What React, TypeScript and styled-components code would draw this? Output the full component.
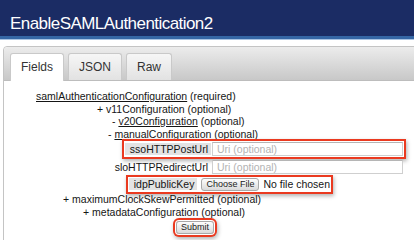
import React from "react";
import styled, { createGlobalStyle, css } from "styled-components";

const Global = createGlobalStyle`
  html, body { margin: 0; padding: 0; background: #fff; overflow: hidden; }
  body { font-family: "Liberation Sans", Arial, sans-serif; color: #151515; }
`;

const Page = styled.div`
  width: 414px;
  height: 240px;
  overflow: hidden;
`;

const Header = styled.header`
  height: 36px;
  background: #1b2c64;
  border-bottom: 3px solid #3566a5;
  box-shadow: 0 1px 0 #a9c3e3;
  padding-left: 10px;
  box-sizing: content-box;
`;

const Title = styled.h1`
  margin: 0;
  padding-top: 11px;
  font-family: "Liberation Sans", Arial, sans-serif;
  font-weight: normal;
  font-size: 17px;
  letter-spacing: -0.55px;
  line-height: 25px;
  color: #fff;
`;

const Panel = styled.section`
  margin: 7px -10px 0 3px;
  border: 1px solid #c4c4c4;
  border-radius: 4px 0 0 0;
  min-height: 220px;
`;

const TabBar = styled.div`
  display: flex;
  gap: 4px;
  height: 27px;
  padding: 6px 0 0 6px;
  background: linear-gradient(#ececec, #c8c8c8);
  border-bottom: 1px solid #bdbdbd;
  border-radius: 4px 0 0 0;
`;

const Tab = styled.div<{ $active?: boolean }>`
  height: 27px;
  margin-bottom: -1px;
  padding: 0 10px;
  box-sizing: border-box;
  border: 1px solid #c9c9c9;
  border-bottom: none;
  border-radius: 3px 3px 0 0;
  font-size: 12px;
  line-height: 27px;
  color: #333;
  background: ${(p) => (p.$active ? "#fff" : "linear-gradient(#f6f6f6, #e2e2e2)")};
  ${(p) => p.$active && css`height: 28px;`}
`;

const Content = styled.div`
  padding-top: 9px;
  font-size: 10.5px;
`;

const Line = styled.div<{ $indent: number }>`
  height: 12.5px;
  line-height: 12.5px;
  padding-left: ${(p) => p.$indent}px;
  white-space: nowrap;
`;

const Link = styled.span`
  text-decoration: underline;
`;

const highlight = css`
  box-shadow: 0 0 0 1px #fff, 0 0 0 3px #ea3a20, 1px 2px 4px 3px rgba(0, 0, 0, 0.3);
`;

const FieldRow = styled.div<{ $width: number; $height: number }>`
  display: flex;
  justify-content: flex-end;
  align-items: center;
  width: ${(p) => p.$width}px;
  height: ${(p) => p.$height}px;
`;

const Group = styled.div<{ $marked?: boolean }>`
  display: flex;
  align-items: center;
  ${(p) => p.$marked && highlight}
`;

const Label = styled.label<{ $marked?: boolean }>`
  height: 12px;
  line-height: 12px;
  padding: 0 3px 0 5px;
  margin-right: 1px;
  white-space: nowrap;
  background: ${(p) => (p.$marked ? "#e3e3e3" : "transparent")};
`;

const TextInput = styled.input`
  width: 191px;
  height: 14px;
  box-sizing: border-box;
  padding: 0 4px;
  border: 1px solid #cfcfcf;
  border-top-color: #b5b5b5;
  font-family: "Liberation Sans", Arial, sans-serif;
  font-size: 10.5px;
  color: #222;
  outline: none;
  &::placeholder { color: #b3b3b3; }
`;

const SmallButton = styled.button<{ $marked?: boolean }>`
  height: 13px;
  padding: 0 4px;
  box-sizing: border-box;
  border: 1px solid #a9a9a9;
  border-radius: 3px;
  background: linear-gradient(#fefefe, #dadada);
  font-family: "Liberation Sans", Arial, sans-serif;
  font-size: 9px;
  line-height: 11px;
  color: #222;
  ${(p) => p.$marked && highlight}
`;

const ChooseButton = styled(SmallButton)`
  margin-left: 3px;
`;

const FileName = styled.span`
  margin-left: 4px;
  font-size: 10.5px;
  white-space: nowrap;
`;

const SubmitRow = styled.div`
  padding: 2px 0 0 172px;
`;

export default function App() {
  return (
    <Page>
      <Global />
      <Header>
        <Title>EnableSAMLAuthentication2</Title>
      </Header>
      <Panel>
        <TabBar>
          <Tab $active>Fields</Tab>
          <Tab>JSON</Tab>
          <Tab>Raw</Tab>
        </TabBar>
        <Content>
          <Line $indent={32}>
            <Link>samlAuthenticationConfiguration</Link> (required)
          </Line>
          <Line $indent={93}>+ v11Configuration (optional)</Line>
          <Line $indent={108}>
            - <Link>v20Configuration</Link> (optional)
          </Line>
          <Line $indent={104}>
            - <Link>manualConfiguration</Link> (optional)
          </Line>
          <FieldRow $width={399} $height={18}>
            <Group $marked>
              <Label $marked>ssoHTTPPostUrl</Label>
              <TextInput placeholder="Uri (optional)" />
            </Group>
          </FieldRow>
          <FieldRow $width={399} $height={17}>
            <Group>
              <Label>sloHTTPRedirectUrl</Label>
              <TextInput placeholder="Uri (optional)" />
            </Group>
          </FieldRow>
          <FieldRow $width={326} $height={18}>
            <Group $marked>
              <Label $marked>idpPublicKey</Label>
              <ChooseButton type="button">Choose File</ChooseButton>
              <FileName>No file chosen</FileName>
            </Group>
          </FieldRow>
          <Line $indent={59}>+ maximumClockSkewPermitted (optional)</Line>
          <Line $indent={79}>+ metadataConfiguration (optional)</Line>
          <SubmitRow>
            <SmallButton type="button" $marked>
              Submit
            </SmallButton>
          </SubmitRow>
        </Content>
      </Panel>
    </Page>
  );
}
